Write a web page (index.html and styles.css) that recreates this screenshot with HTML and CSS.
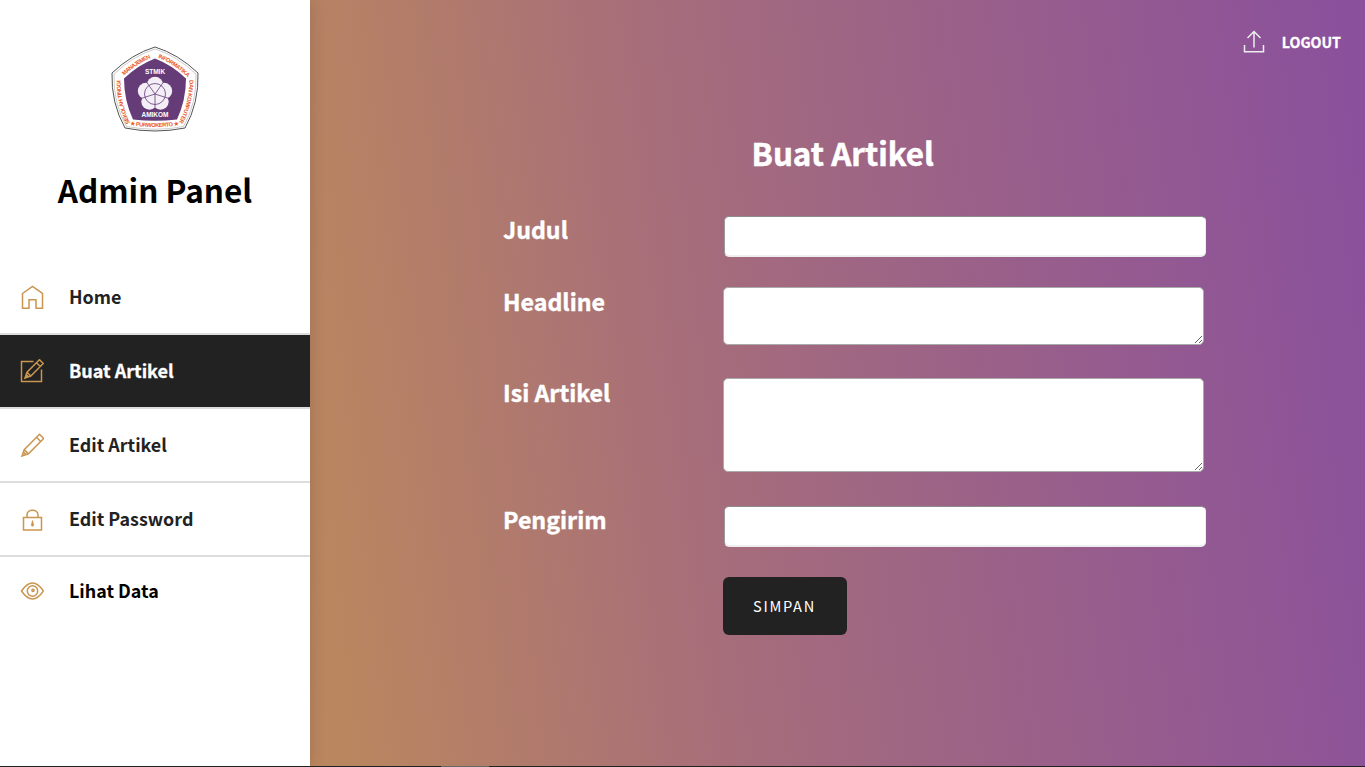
FILE: index.html
```html
<!DOCTYPE html>
<html lang="id">
<head>
<meta charset="utf-8">
<title>Admin Panel</title>
<link rel="stylesheet" href="styles.css">
</head>
<body>
<div class="page">
  <aside class="sidebar">
    <svg class="logo" viewBox="0 0 88 86">
      <path d="M44 1Q67 8 87 27Q88 57 74 82Q44 88 14 82Q0 57 1 27Q21 8 44 1Z" fill="#fff" stroke="#555" stroke-width="1"/>
      <path d="M44 3Q66 10 85 28Q86 57 72.500 80.500Q44 86 15.500 80.500Q2 57 3 28Q22 10 44 3Z" fill="none" stroke="#aaa" stroke-width=".6"/>
      <path d="M44 12.500Q61 19 75 32.500Q75 54 66 73.500Q44 76 22 73.500Q13 54 13 32.500Q27 19 44 12.500Z" fill="#653b78"/>
      <g fill="#f4eff6">
        <circle cx="44" cy="39" r="8.200"/><circle cx="53" cy="45" r="8.200"/><circle cx="49.500" cy="55.500" r="8.200"/><circle cx="38.500" cy="55.500" r="8.200"/><circle cx="35" cy="45" r="8.200"/><circle cx="44" cy="47.500" r="8"/>
      </g>
      <g fill="none" stroke="#653b78" stroke-width=".8">
        <circle cx="44" cy="48" r="10.500"/>
        <path d="M44 48v14M44 48l-14 4.500M44 48l14 4.500M44 48l-8.500-12M44 48l8.500-12"/>
      </g>
      <g class="logo-name"><text x="44" y="27.500">STMIK</text><text x="44" y="71">AMIKOM</text></g>
      <g class="logo-ring">
        <path id="nw" d="M13 29.500Q26 17.500 41 11.500" fill="none"/>
        <path id="ne" d="M47 11.500Q62 17.500 77 31.500" fill="none"/>
        <path id="e" d="M78.500 34Q78 58 67 78" fill="none"/>
        <path id="w" d="M19 77Q9.500 58 9.500 33" fill="none"/>
        <path id="s" d="M19 79Q44 83 69 79" fill="none"/>
        <text><textPath href="#nw" textLength="32">MANAJEMEN</textPath></text>
        <text><textPath href="#ne" textLength="36">INFORMATIKA</textPath></text>
        <text><textPath href="#e" textLength="44">DAN KOMPUTER</textPath></text>
        <text><textPath href="#w" textLength="44">SEKOLAH TINGGI</textPath></text>
        <text><textPath href="#s" textLength="49">★ PURWOKERTO ★</textPath></text>
      </g>
    </svg>
    <h1 class="brand">Admin Panel</h1>
    <nav class="menu">
      <a class="item"><svg class="icon" viewBox="0 0 24 24"><path d="M2.500 8.500L12.500 1.500L22.500 8.500V23.200H16V14.800H9V23.200H2.500Z"/></svg><span>Home</span></a>
      <a class="item active"><svg class="icon" viewBox="0 0 24 24"><path d="M13.500 2.500H1.500V22.500H21.500V10.500M5 19L7 13.200L19.500 .7L23.300 4.500L10.800 17ZM16.500 3.700L20.300 7.500M7 13.200L10.800 17M5 19L8 16"/></svg><span>Buat Artikel</span></a>
      <a class="item"><svg class="icon" viewBox="0 0 24 24"><path d="M2 23L4.200 16.600L19.500 1.300L23.700 5.500L8.400 20.800ZM16.500 4.300L20.700 8.500M4.200 16.600L8.400 20.800M2 23L3.500 19L6 21.500Z"/></svg><span>Edit Artikel</span></a>
      <a class="item"><svg class="icon" viewBox="0 0 24 24"><path d="M3.500 10.500H21.500V23H3.500ZM7 10.500V8C7 1.500 18 1.500 18 8V10.500"/><path class="keyhole" d="M12.500 13.500L11.400 17.500A1.200 1.200 0 1 0 13.600 17.500Z"/></svg><span>Edit Password</span></a>
      <a class="item last"><svg class="icon" viewBox="0 0 24 24"><path d="M1.500 12Q12.500-4 23.500 12Q12.500 28 1.500 12Z"/><circle cx="12.500" cy="12" r="5.200"/><circle cx="13" cy="11.300" r="1.100"/></svg><span>Lihat Data</span></a>
    </nav>
  </aside>
  <main class="main">
    <a class="logout"><svg class="icon" viewBox="0 0 24 24"><path d="M12 17.500V2M5.500 8L12 1.500L18.500 8M2.500 15V21.700H21.500V15"/></svg><span>LOGOUT</span></a>
    <h2 class="title">Buat Artikel</h2>
    <form class="form">
      <label>Judul</label><input class="field" type="text">
      <label>Headline</label><textarea class="area short"></textarea>
      <label>Isi Artikel</label><textarea class="area tall"></textarea>
      <label>Pengirim</label><input class="field" type="text">
      <button class="save" type="button">SIMPAN</button>
    </form>
  </main>
</div>
<footer class="edge"><div class="thumb"></div></footer>
</body>
</html>
```
FILE: styles.css
```css
* { box-sizing: border-box; }
body { margin: 0; height: 767px; overflow: hidden; display: flex; flex-direction: column; font-family: "Noto Sans CJK JP", "Noto Sans", sans-serif; }
.page { flex: 1; display: flex; min-height: 0; background: linear-gradient(83deg, #c4925a 0%, #b98560 25%, #a66d7b 51%, #8a509c 99%); }
.sidebar { flex: none; width: 310px; background: #fff; display: flex; flex-direction: column; align-items: center; padding-top: 46px; box-shadow: 0 0 14px rgba(60,40,40,.22); }
.logo { width: 88px; height: 86px; flex: none; }
.logo text { font-family: "Liberation Sans", sans-serif; font-weight: bold; }
.logo-name { fill: #fff; font-size: 6.500px; text-anchor: middle; }
.logo-ring { fill: #e8592a; font-size: 5.700px; }
.brand { margin: 33px 0 0; font-size: 31.500px; line-height: 48px; font-weight: 700; color: #000; white-space: nowrap; }
.menu { width: 100%; margin-top: 48px; }
.item { height: 74px; border-bottom: 2px solid #ddd; display: flex; align-items: center; padding-left: 20px; gap: 25px; color: #222; font-size: 17.900px; font-weight: 700; line-height: 26px; }
.item span { padding-bottom: 2px; }
.item.active { background: #222; color: #fff; font-size: 18px; -webkit-text-stroke: .3px; }
.item.last { height: 68px; border: 0; color: #000; }
.icon { width: 24px; height: 24px; flex: none; fill: none; stroke: #c9954f; stroke-width: 1.500; }
.keyhole { fill: #c9954f; stroke-width: .6; }
.main { flex: 1; position: relative; padding: 129px 159px 0 193px; color: #fff; }
.logout { position: absolute; top: 30px; right: 24px; display: flex; align-items: center; gap: 16px; font-size: 14.200px; font-weight: 700; line-height: 24px; -webkit-text-stroke: .3px; }
.logout .icon { stroke: #eee; }
.title { margin: 0 0 38px; padding-left: 248.500px; font-size: 31.400px; line-height: 48px; font-weight: 700; -webkit-text-stroke: .5px; }
.form { display: grid; grid-template-columns: 220px 483px; grid-template-rows: 72px 91px 127px 72px 58px; align-items: start; }
.form label { font-size: 23.200px; font-weight: 700; line-height: 28px; -webkit-text-stroke: .4px; }
.field { width: 482px; height: 41px; margin: 1px 0 0 .5px; border-radius: 5px; background: #fff; border-color: #8d8d8d #eee #eee #999; border-style: solid; border-width: 1px 1px 2px 1px; }
.area { width: 481px; margin: 0; border: 1px solid #aaa; border-radius: 5px; background: #fff; resize: both; }
.short { height: 58px; }
.tall { height: 94px; }
.save { grid-column: 2; width: 124px; height: 58px; padding: 0 1px 2px 0; border: 0; border-radius: 6px; background: #222; color: #fff; font: 400 14.600px "Noto Sans CJK JP", sans-serif; letter-spacing: 1.700px; }
.edge { height: 1px; background: #222; padding-left: 441px; }
.thumb { width: 48px; height: 1px; background: #666; }
```
